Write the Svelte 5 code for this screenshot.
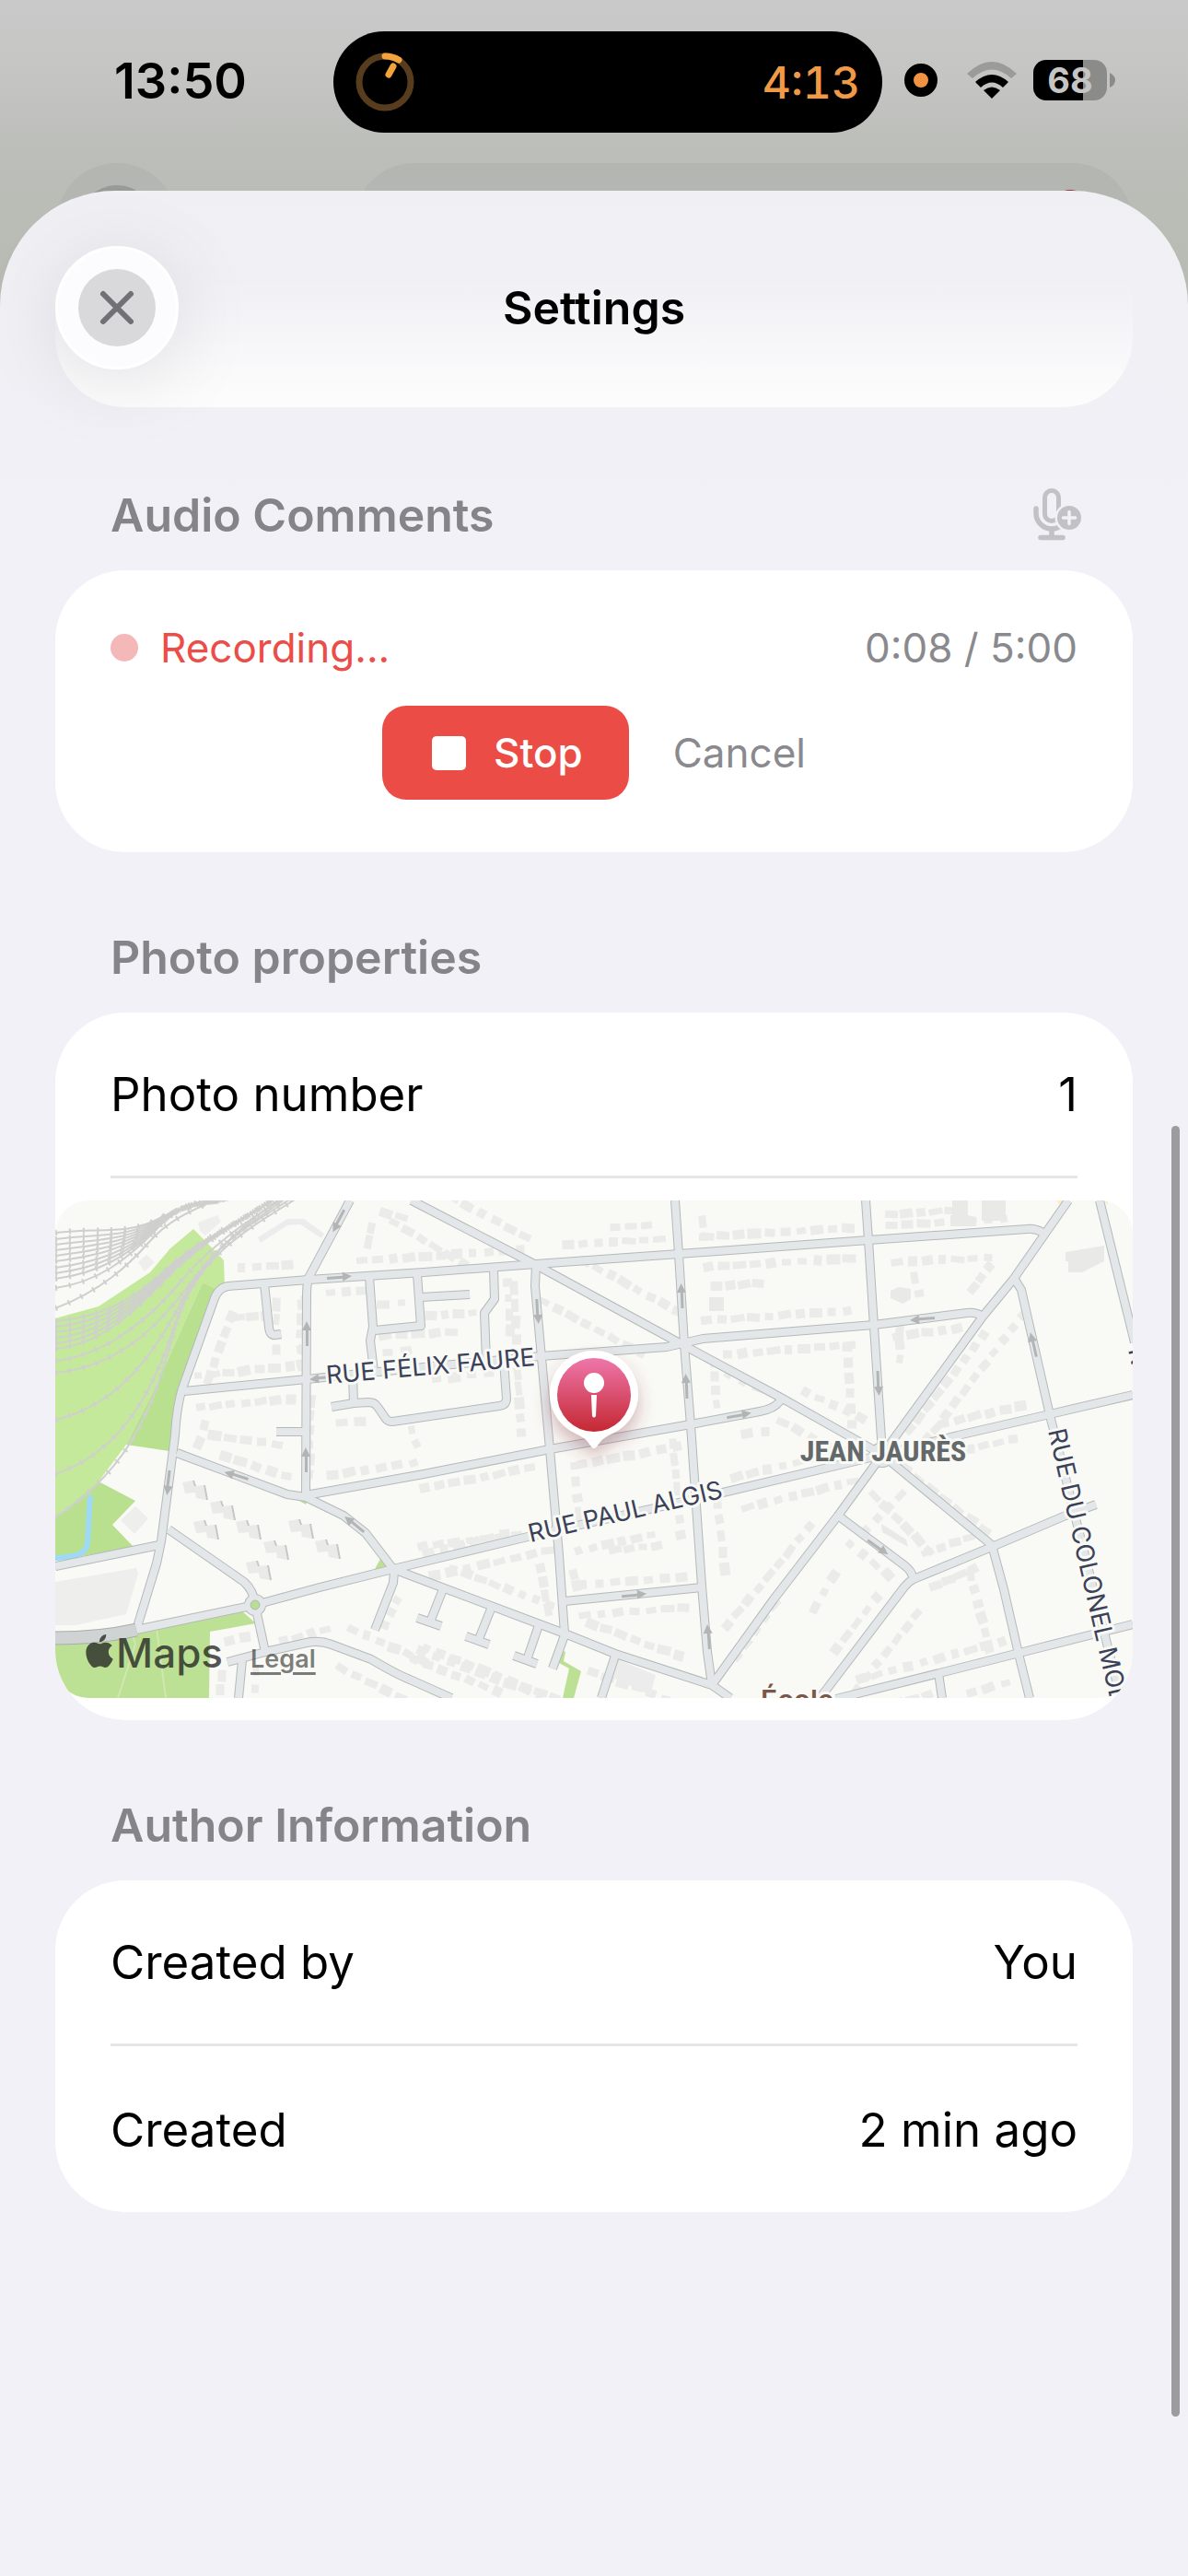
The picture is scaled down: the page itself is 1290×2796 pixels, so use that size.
<script>
	let recording = true;
	let elapsed = '0:08';
	let limit = '5:00';

	const author = [
		{ label: 'Created by', value: 'You' },
		{ label: 'Created', value: '2 min ago' }
	];

	const roads = [
		'M320 0 L275 84 Q273 92 273 104 L272 320',
		'M88 466 L110 394 L115 370 L130 255 Q132 222 138 204 L173 106 Q178 94 188 93 L275 86 L400 78 L522 69 L677 58 L883 43 L1055 31 Q1064 30 1073 35',
		'M387 0 L522 70 L680 156 L788 214 L898 276 L1017 374 L1030 422 L1046 492 L1058 540',
		'M522 70 L521 93 L537 270 L547 385 L553 470',
		'M673 0 L677 58 L683 156 L690 244 L702 418 L708 490 L713 526',
		'M880 0 L883 43 L889 137 L898 274',
		'M140 207 L273 194 L400 181 L527 169 L664 159 L703 150 L889 135 L990 122 Q1000 121 1007 126',
		'M132 274 L252 319 L272 322 L313 342 L337 361 L367 400 L420 420 L553 470 L608 492 L713 526 L733 540',
		'M272 320 L400 297 L537 270 L690 243 L765 229 Q782 226 788 216',
		'M88 466 L217 439 L287 420 L367 400 L513 365 L725 317 L898 276 L980 255 L1080 232 L1170 211',
		'M123 357 L205 414 Q216 424 217 439 L228 490',
		'M187 501 L228 490 L273 480 Q287 477 300 482 L343 498 Q370 514 385 520 L430 540',
		'M203 499 L199 540',
		'M368 402 L367 415 L347 466',
		'M0 397 L113 374',
		'M1134 0 L1172 154',
		'M1100 0 L1040 86 L1007 126 L898 276 L850 342 L780 433 L713 526',
		'M1041 84 L1049 97 L1080 233 L1158 545',
		'M850 342 L922 396 Q930 402 932 411',
		'M1130 330 L1097 342 L1017 376 L932 411 Q926 414 920 422 L838 530 L830 540',
		'M848 541 L960 513 L1047 491 L1170 460',
		'M959 513 L963 540',
		'M553 435 L702 420',
		'M227 90 L232 138 Q233 146 238 146 L245 145',
		'M341 83 L345 137 L342 152 L346 185',
		'M347 141 L397 136 L393 80',
		'M397 105 L450 102',
		'M476 74 L477 107 L466 122 L468 174',
		'M487 174 L490 215 Q490 222 482 223 L380 238 L366 240 Q360 240 357 234 L350 224 Q347 219 340 219 L324 220 L300 224',
		'M323 190 L324 220',
		'M240 251 L272 251',
		'M421 422 L408 455',
		'M393 453 L419 462',
		'M474 441 L460 476',
		'M446 473 L471 482',
		'M525 461 L513 496',
		'M498 494 L523 503',
		'M553 472 L540 508',
		'M608 494 L593 540'
	];

	const yardTracks = [35, 42, 48, 54, 60, 66, 73, 79, 85, 95].map(
		(y, i) => `M0 ${y} C45 ${y - 6} 78 ${38 + i * 3} 112 ${20 + i} S165 6 190 -4`
	);
	const mainTracks = [
		'M0 117 C50 98 80 70 102 45 S150 10 180 -3',
		...[131, 137, 143, 149, 155, 161].map(
			(y, i) => `M0 ${y} C45 ${y - 4} 80 ${112 + i * 3} 118 ${77 + i * 2} S190 30 238 -2`
		),
		'M0 174 C60 168 110 120 138 86 S210 20 248 -2',
		'M0 187 C70 180 112 135 142 96 S205 24 245 -2',
		'M0 238 C70 222 108 165 138 108 S205 30 250 -2',
		'M0 297 C80 270 110 195 133 126 S200 34 256 -2',
		'M0 344 C90 286 110 210 130 138 S200 36 262 -2'
	];
	const tracks = [...yardTracks, ...mainTracks];

	// Stretches of street with houses beside them: x1, y1, x2, y2, distance from the axis
	const frontages = [
		[195, 92, 262, 87, -18], [290, 84, 340, 81, 17], [325, 82, 515, 69, -16], [345, 100, 385, 96, 14],
		[285, 100, 281, 190, 13], [262, 105, 262, 185, -5], [178, 112, 148, 195, -17], [190, 112, 235, 108, 16],
		[250, 105, 250, 170, 10], [148, 206, 265, 194, -15], [148, 206, 262, 196, 19], [152, 230, 140, 268, -14],
		[165, 250, 250, 262, 4], [172, 290, 255, 316, -15], [288, 210, 285, 305, 10], [300, 225, 340, 222, 17],
		[295, 314, 400, 298, -15], [390, 299, 520, 274, 15], [390, 240, 400, 270, 6], [390, 376, 510, 362, 0],
		[400, 0, 510, 58, -17], [370, 4, 460, 58, 18], [350, 12, 385, 20, 0], [330, 20, 325, 50, -14],
		[400, 116, 460, 112, 10], [350, 160, 390, 156, 6], [350, 160, 440, 154, -12], [405, 195, 480, 186, 0],
		[505, 85, 510, 160, 8], [490, 80, 495, 150, 0], [500, 180, 505, 260, -2],
		[550, 66, 665, 58, -17], [530, 95, 650, 158, 13], [560, 76, 675, 138, -16], [600, 30, 650, 26, 0],
		[690, 15, 693, 50, -12], [700, 56, 870, 46, -17], [700, 56, 870, 46, 17], [710, 80, 770, 76, 14],
		[700, 148, 870, 136, -17], [720, 150, 870, 138, 18], [900, 45, 1040, 36, -17], [905, 45, 1020, 40, 22],
		[900, 15, 980, 10, 0], [930, 75, 940, 110, 0], [905, 130, 985, 120, 18], [905, 132, 905, 180, -12],
		[700, 170, 705, 230, -14], [720, 190, 770, 212, -6], [800, 220, 875, 255, -17], [790, 222, 870, 262, 17],
		[875, 150, 882, 250, 16], [910, 245, 1000, 130, 16], [925, 255, 1040, 105, 20],
		[1030, 75, 1005, 110, 15], [960, 258, 1060, 236, -15], [980, 256, 1045, 242, 16],
		[560, 270, 680, 248, 18], [550, 280, 556, 350, -13], [556, 360, 650, 340, 22], [560, 400, 565, 425, -2],
		[565, 434, 690, 424, -16], [565, 434, 690, 424, 17], [600, 380, 660, 374, 0], [680, 255, 690, 370, 10],
		[705, 320, 715, 410, -13], [740, 318, 870, 286, 17], [735, 318, 870, 286, -16], [740, 240, 780, 236, 14],
		[400, 398, 500, 374, -14], [400, 392, 540, 362, 17], [420, 410, 540, 455, -14], [535, 390, 545, 450, 9],
		[400, 470, 555, 530, 14], [385, 490, 490, 530, 6], [570, 470, 680, 510, -14], [580, 500, 690, 540, 10],
		[770, 420, 720, 490, -20], [840, 360, 740, 480, 20], [850, 400, 820, 450, 0], [870, 350, 925, 395, 22],
		[905, 300, 1005, 378, -18], [900, 300, 970, 370, 22], [945, 400, 1005, 378, -16], [945, 412, 1000, 388, 10],
		[1005, 395, 1028, 490, 13], [925, 430, 850, 525, -20], [905, 430, 850, 500, 10], [870, 535, 1040, 490, -14],
		[870, 540, 950, 518, 17], [980, 515, 1035, 500, 22], [910, 300, 860, 350, -20],
		[240, 480, 300, 464, 0], [310, 475, 400, 515, -14], [310, 490, 390, 530, 16], [190, 510, 186, 540, 8],
		[224, 500, 222, 540, 6], [380, 430, 360, 470, 6], [400, 460, 560, 520, 28], [180, 480, 215, 472, 0]
	];

	function noise(n) {
		const v = Math.sin(n * 127.1) * 43758.5453;
		return v - Math.floor(v);
	}

	const houses = frontages.flatMap(([x1, y1, x2, y2, off], row) => {
		const dx = x2 - x1;
		const dy = y2 - y1;
		const length = Math.hypot(dx, dy);
		const angle = (Math.atan2(dy, dx) * 180) / Math.PI;
		const count = Math.max(2, Math.round(length / 17));
		return Array.from({ length: count }, (_, i) => {
			const seed = row * 31 + i;
			const t = (i + 0.5) / count;
			return {
				x: Math.round(x1 + dx * t - (dy / length) * off),
				y: Math.round(y1 + dy * t + (dx / length) * off),
				w: 8 + Math.round(noise(seed) * 7),
				h: 7 + Math.round(noise(seed + 0.4) * 4),
				angle: Math.round(angle + noise(seed + 0.7) * 16 - 8)
			};
		});
	});

	const blocks = [[138, 306], [168, 328], [150, 349], [196, 349], [226, 371], [253, 348], [282, 370], [207, 393]];

	const arrows = [
		[308, 22, 118], [308, 83, -4], [273, 145, -90], [290, 193, 175], [272, 282, -90], [197, 299, 198],
		[123, 306, 97], [325, 352, 220], [524, 120, 87], [680, 104, -92], [685, 202, -92], [742, 233, -10],
		[628, 428, -5], [709, 474, -94], [942, 129, 176], [894, 198, 88], [1062, 157, -103], [893, 376, 36]
	];
</script>

<svelte:head>
	<title>Settings</title>
</svelte:head>

<div class="screen">
	<div class="backdrop" aria-hidden="true">
		<span class="ghost-circle"></span>
		<span class="ghost-pill"></span>
	</div>

	<div class="status-bar">
		<time class="clock">13:50</time>
		<div class="island">
			<svg class="timer" viewBox="0 0 64 64" aria-hidden="true">
				<circle cx="32" cy="32" r="28" fill="none" stroke="#573d1d" stroke-width="7" />
				<path d="M32 4 A28 28 0 0 1 47 8" class="hand" />
				<path d="M36 24 L41 15" class="hand" />
			</svg>
			<span class="countdown">4:13</span>
		</div>
		<div class="indicators">
			<span class="mic-dot"></span>
			<svg class="wifi" viewBox="0 0 54 40" aria-hidden="true">
				<path d="M0 13 Q27 -13 54 13 L48 18 Q27 -1 6 18 Z" fill="#9b9b99" />
				<path d="M9 22 Q27 6 45 22 L39 28 Q27 17 15 28 Z" />
				<path d="M18 31 Q27 24 36 31 L27 40 Z" />
			</svg>
			<div class="battery">
				<span class="level">68</span>
				<svg class="nub" viewBox="0 0 6 16" aria-hidden="true">
					<path d="M0 0 Q6 3 6 8 T0 16 Z" fill="#8b8b89" />
				</svg>
			</div>
		</div>
	</div>

	<main class="sheet">
		<header class="sheet-header">
			<button class="close" aria-label="Close">
				<svg viewBox="0 0 84 84" aria-hidden="true">
					<circle cx="42" cy="42" r="42" fill="#d9d9dc" />
					<path d="M27 27 L57 57 M57 27 L27 57" stroke="#717175" stroke-width="6" stroke-linecap="round" />
				</svg>
			</button>
			<h1>Settings</h1>
		</header>

		<section>
			<div class="section-title">
				<h2>Audio Comments</h2>
				<button class="add-audio" aria-label="Add audio comment" disabled={recording}>
					<svg viewBox="0 0 52 58" fill="none" stroke="#c1c1c6" stroke-linecap="round" aria-hidden="true">
						<rect x="12.5" y="2.5" width="15" height="33" rx="7.5" stroke-width="5" />
						<path d="M3 22 V27 A17 17 0 0 0 37 27" stroke-width="5.5" />
						<path d="M20 46 V53 M8 53.5 H32" stroke-width="5.5" />
						<circle cx="39" cy="32" r="15.5" fill="#f2f1f7" stroke="none" />
						<circle cx="39" cy="32" r="13" fill="#c1c1c6" stroke="none" />
						<path d="M39 25.5 V38.5 M32.5 32 H45.5" stroke="#f2f1f7" stroke-width="3.5" />
					</svg>
				</button>
			</div>
			<div class="card recorder">
				<div class="recorder-status">
					<span class="rec-dot"></span>
					<span class="rec-label">Recording...</span>
					<span class="rec-time">{elapsed} / {limit}</span>
				</div>
				<div class="recorder-actions">
					<button class="stop" on:click={() => (recording = false)}>
						<span class="stop-icon"></span>
						Stop
					</button>
					<button class="cancel" on:click={() => (recording = false)}>Cancel</button>
				</div>
			</div>
		</section>

		<section>
			<div class="section-title">
				<h2>Photo properties</h2>
			</div>
			<div class="card">
				<dl>
					<div class="row divided">
						<dt>Photo number</dt>
						<dd>1</dd>
					</div>
				</dl>
				<div class="map">
					<svg class="map-canvas" viewBox="0 0 1170 540" role="img" aria-label="Map of the photo location">
						<defs>
							<linearGradient id="pin-fill" x1="0" y1="0" x2="0" y2="1">
								<stop offset="0" stop-color="#ee76aa" />
								<stop offset="1" stop-color="#c52832" />
							</linearGradient>
							<filter id="pin-shadow" x="-50%" y="-50%" width="200%" height="200%">
								<feDropShadow dx="0" dy="10" stdDeviation="9" flood-color="#8c3c46" flood-opacity="0.35" />
							</filter>
						</defs>
						<rect width="1170" height="540" fill="#f9f9f5" />

						<!-- parks and water -->
						<path d="M0 128 L47 115 L103 78 L125 52 L150 31 L165 46 L183 65 L184 93 L173 97 L160 89 L110 200 L77 265 L47 305 L0 344 Z" fill="#c4e99b" />
						<path d="M160 89 L175 97 L138 204 L124 272 L77 265 L110 200 Z" fill="#b8e08f" />
						<path d="M47 305 L87 326 L62 352 L85 376 L0 391 V344 Z" fill="#b8e08f" />
						<path d="M0 480 L88 468 L203 446 L218 459 L168 468 L167 540 H0 Z" fill="#bde194" />
						<path d="M83 468 L87 482 L68 540 M110 464 L120 540" stroke="#cfe8b0" stroke-width="2" fill="none" />
						<path d="M550 488 L554 490 L552 500 L571 511 L563 540 L551 540 L558 508 L547 502 Z M347 400 L353 389 L363 400 Z M258 322 L272 330 L275 324 Z" fill="#bde194" />
						<path d="M38 320 L35 372 Q34 381 23 385 Q12 388 0 388" stroke="#9edaf5" stroke-width="6" fill="none" />
						<path d="M1087 0 H1094 L1091 5 Z M1139 0 H1144 L1142 5 Z" fill="#fdecc4" />

						<!-- railway -->
						{#each tracks as d}
							<path {d} class="rail" />
							<path {d} class="sleepers" />
						{/each}

						<!-- buildings -->
						{#each houses as h}
							<rect
								x={-h.w / 2}
								y={-h.h / 2}
								width={h.w}
								height={h.h}
								transform="translate({h.x} {h.y}) rotate({h.angle})"
								class="house"
							/>
						{/each}
						{#each blocks as [x, y]}
							<g transform="translate({x} {y})">
								<path d="M0 0 L11 -2 L13 4 L23 3 L26 19 L15 17 L14 11 L3 12 Z" fill="#eaeae9" />
								<path d="M11 -2 L13 -2 L15 4 L13 4 Z M23 3 L25 3 L28 19 L26 19 Z" fill="#c5c6c5" />
							</g>
						{/each}
						<path d="M0 414 L88 399 L90 405 L77 449 L22 461 H0 Z M71 347 L87 332 L101 345 L86 362 Z M155 24 L176 16 L180 23 L163 38 L157 33 Z M90 67 L99 59 L108 67 L97 77 Z" fill="#eeeeed" />
						<path d="M220 40 L252 20 L270 20 L292 36 L289 41 L266 26 L252 27 L223 46 Z M610 498 L652 515 L646 537 L606 518 Z" fill="#ececec" />
						<path d="M1097 56 L1139 49 V66 L1115 78 H1100 V66 H1097 Z M1006 0 H1032 V22 H1006 Z M974 0 H991 V16 L1000 18 V28 H972 V16 H974 Z" fill="#e9eae7" />
						<path d="M710 105 H726 V120 H710 Z M907 98 L916 94 L929 96 V107 L920 112 L907 106 Z M897 351 L924 368 L926 376 L898 360 Z" fill="#e9e9e8" />

						<!-- streets -->
						{#each roads as d}
							<path {d} class="road-edge" />
						{/each}
						<circle cx="217" cy="439" r="12" fill="#b4b9b9" />
						<circle cx="898" cy="276" r="14" fill="#b4b9b9" />
						{#each roads as d}
							<path {d} class="road" />
						{/each}
						<circle cx="217" cy="439" r="11" fill="#e3e7e9" />
						<circle cx="217" cy="439" r="5" fill="#b9dd92" stroke="#b4b9b9" />
						<circle cx="898" cy="276" r="13" fill="#e3e7e9" />
						<path d="M0 475 Q48 475 88 466" stroke="#a9adae" stroke-width="15" fill="none" />
						<path d="M0 475 Q48 475 88 466" stroke="#cfd3d4" stroke-width="13" fill="none" />

						{#each arrows as [x, y, angle]}
							<path
								d="M-13 -1 H4 V-5 L14 0 L4 5 V2 H-13 Z"
								fill="#b3b5b5"
								transform="translate({x} {y}) rotate({angle})"
							/>
						{/each}

						<text class="street" transform="translate(295 199) rotate(-5)">RUE FÉLIX FAURE</text>
						<text class="street" transform="translate(516 371) rotate(-13)">RUE PAUL ALGIS</text>
						<text class="street" transform="translate(1078 250) rotate(77)">RUE DU COLONEL MOLL</text>
						<text class="street" transform="translate(1165 162) rotate(77)">R</text>
						<text class="district" x="899" y="283" text-anchor="middle">JEAN JAURÈS</text>
						<text class="place" x="766" y="553">École</text>

						<!-- photo marker -->
						<path
							d="M585 163 A47 47 0 0 1 605 253 Q594 257 588 267 Q585 271 582 267 Q576 257 565 253 A47 47 0 0 1 585 163 Z"
							fill="#fff"
							filter="url(#pin-shadow)"
						/>
						<circle cx="585" cy="211" r="40" fill="url(#pin-fill)" />
						<circle cx="585" cy="198" r="11" fill="#fff" />
						<path d="M582 211 H588 L587 234 Q585 237 583 234 Z" fill="#fff" />
					</svg>
					<div class="attribution">
						<svg class="apple" viewBox="0 0 24 24" aria-hidden="true">
							<path
								d="M12.152 6.896c-.948 0-2.415-1.078-3.96-1.04-2.04.027-3.91 1.183-4.961 3.014-2.117 3.675-.546 9.103 1.519 12.09 1.013 1.454 2.208 3.09 3.792 3.039 1.52-.065 2.09-.987 3.935-.987 1.831 0 2.35.987 3.96.948 1.637-.026 2.676-1.48 3.676-2.948 1.156-1.688 1.636-3.325 1.662-3.415-.039-.013-3.182-1.221-3.22-4.857-.026-3.04 2.48-4.494 2.597-4.559-1.429-2.09-3.623-2.324-4.39-2.376-2-.156-3.675 1.09-4.61 1.09zM15.53 3.83c.843-1.012 1.4-2.427 1.245-3.83-1.207.052-2.662.805-3.532 1.818-.78.896-1.454 2.338-1.273 3.714 1.338.104 2.715-.688 3.559-1.701"
							/>
						</svg>
						<span class="maps">Maps</span>
						<a href="#legal">Legal</a>
					</div>
				</div>
			</div>
		</section>

		<section>
			<div class="section-title">
				<h2>Author Information</h2>
			</div>
			<dl class="card">
				{#each author as item, i}
					<div class="row" class:divided={i < author.length - 1}>
						<dt>{item.label}</dt>
						<dd>{item.value}</dd>
					</div>
				{/each}
			</dl>
		</section>

		<span class="scroll-thumb" aria-hidden="true"></span>
	</main>
</div>

<style>
	:global(body) {
		margin: 0;
		background: #f2f1f7;
	}

	.screen {
		position: relative;
		display: flex;
		flex-direction: column;
		min-height: 100vh;
		overflow: hidden;
		background: linear-gradient(#c9c9c9 0, #c5c5c4 80px, #bcbeb9 160px, #b7b9b2 340px);
		font-family: Inter, 'Liberation Sans', sans-serif;
		color: #000;
	}

	.ghost-circle,
	.ghost-pill {
		position: absolute;
		top: 177px;
		height: 132px;
		border-radius: 66px;
		background: #b4b6b2;
	}

	.ghost-circle {
		left: 61px;
		width: 132px;
	}

	.ghost-circle::after {
		content: '';
		position: absolute;
		inset: 24px;
		border-radius: 50%;
		background: #989a95;
	}

	.ghost-pill {
		left: 384px;
		right: 60px;
	}

	.ghost-pill::after {
		content: '';
		position: absolute;
		top: 29px;
		right: 50px;
		width: 36px;
		height: 36px;
		border-radius: 50%;
		background: #93352f;
	}

	.status-bar {
		position: relative;
		display: grid;
		grid-template-columns: 362px 1fr 332px;
		align-items: start;
		box-sizing: border-box;
		height: 207px;
		padding-top: 34px;
	}

	.clock {
		padding: 24px 0 0 124px;
		font-size: 54px;
		font-weight: 600;
		line-height: 60px;
	}

	.island {
		display: flex;
		align-items: center;
		justify-content: space-between;
		box-sizing: border-box;
		height: 110px;
		padding: 0 24px;
		border-radius: 55px;
		background: #000;
	}

	.timer {
		width: 64px;
		height: 64px;
	}

	.hand {
		fill: none;
		stroke: #f2a33c;
		stroke-width: 7;
		stroke-linecap: round;
	}

	.countdown {
		color: #f09a48;
		font-size: 48px;
		font-weight: 500;
		font-variant-numeric: tabular-nums;
	}

	.indicators {
		display: flex;
		align-items: center;
		height: 106px;
		padding-left: 24px;
	}

	.mic-dot {
		box-sizing: border-box;
		width: 36px;
		height: 36px;
		margin-right: 32px;
		border: 10px solid #000;
		border-radius: 50%;
		background: #f09443;
	}

	.wifi {
		width: 54px;
		height: 40px;
		margin-right: 18px;
	}

	.battery {
		display: flex;
		align-items: center;
		gap: 3px;
	}

	.level {
		width: 80px;
		border-radius: 14px;
		background: linear-gradient(90deg, #000 68%, #8b8b89 68%);
		color: #c5c5c4;
		font-size: 38px;
		font-weight: 700;
		line-height: 44px;
		text-align: center;
	}

	.nub {
		width: 6px;
		height: 16px;
	}

	.sheet {
		position: relative;
		flex: 1;
		padding: 0 60px 120px;
		border-radius: 125px 125px 0 0;
		background: linear-gradient(#efeff4 0, #f2f1f7 400px);
	}

	.sheet-header {
		display: grid;
		grid-template-columns: 134px 1fr 134px;
		align-items: center;
		margin-bottom: 3px;
		padding: 60px 0 41px;
		border-radius: 0 0 76px 76px;
		background: linear-gradient(rgba(252, 252, 252, 0) 40%, #fcfcfc 95%);
	}

	button {
		padding: 0;
		border: 0;
		background: none;
		font: inherit;
		cursor: pointer;
	}

	.close {
		display: grid;
		place-items: center;
		box-sizing: border-box;
		width: 134px;
		height: 134px;
		border: 3px solid #fff;
		border-radius: 50%;
		background: #fcfcfe;
		box-shadow: 0 12px 90px rgba(0, 0, 30, 0.1);
	}

	.close svg {
		width: 84px;
		height: 84px;
	}

	h1,
	h2,
	dl,
	dd {
		margin: 0;
	}

	h1 {
		font-size: 50px;
		font-weight: 600;
		line-height: 60px;
		text-align: center;
	}

	.section-title {
		display: flex;
		align-items: center;
		justify-content: space-between;
		padding: 84px 56px 30px 60px;
	}

	h2 {
		color: #858489;
		font-size: 50px;
		font-weight: 600;
		line-height: 60px;
	}

	.add-audio,
	.add-audio svg {
		display: block;
		width: 52px;
		height: 58px;
	}

	.card {
		overflow: hidden;
		border-radius: 76px;
		background: #fff;
	}

	.recorder {
		display: flex;
		flex-direction: column;
		gap: 36px;
		padding: 57px 60px;
		font-size: 44px;
	}

	.recorder-status {
		display: flex;
		align-items: center;
		line-height: 54px;
	}

	.rec-dot {
		width: 30px;
		height: 30px;
		margin-right: 24px;
		border-radius: 50%;
		background: #f4b8b9;
	}

	.rec-label {
		color: #eb4d48;
	}

	.rec-time {
		margin-left: auto;
		color: #8a8a8e;
	}

	.recorder-actions {
		display: flex;
		align-items: center;
		justify-content: center;
		gap: 48px;
	}

	.stop {
		display: flex;
		align-items: center;
		gap: 30px;
		height: 102px;
		padding: 0 50px 0 54px;
		border-radius: 26px;
		background: #eb4d46;
		color: #fff;
		font-weight: 500;
	}

	.stop-icon {
		width: 37px;
		height: 37px;
		border-radius: 5px;
		background: #fff;
	}

	.cancel {
		color: #8a8a8e;
	}

	.row {
		display: flex;
		align-items: center;
		justify-content: space-between;
		box-sizing: border-box;
		height: 180px;
		margin: 0 60px;
		font-size: 51px;
	}

	.divided {
		border-bottom: 3px solid #e6e6e7;
	}

	.map {
		position: relative;
		margin: 24px 0;
		overflow: hidden;
		border-radius: 36px;
	}

	.map-canvas {
		display: block;
		width: 100%;
		height: auto;
	}

	.rail {
		fill: none;
		stroke: #cfd0cd;
		stroke-width: 2;
	}

	.sleepers {
		fill: none;
		stroke: #cfd0cd;
		stroke-width: 6;
		stroke-dasharray: 2 13;
	}

	.house {
		fill: #ebebea;
	}

	.road-edge,
	.road {
		fill: none;
		stroke: #b4b9b9;
		stroke-width: 10;
		stroke-linejoin: round;
	}

	.road {
		stroke: #e3e7e9;
		stroke-width: 8;
	}

	.street,
	.district,
	.place {
		paint-order: stroke;
		stroke: #f9f9f5;
		stroke-width: 6px;
		stroke-linejoin: round;
	}

	.street {
		fill: #3b4158;
		font-size: 27px;
	}

	.district {
		fill: #63696b;
		font-family: 'Roboto Condensed', 'Liberation Sans Narrow', Roboto, sans-serif;
		font-size: 32px;
		font-weight: 700;
	}

	.place {
		fill: #7b5748;
		font-size: 30px;
		font-weight: 600;
	}

	.attribution {
		position: absolute;
		left: 30px;
		bottom: 14px;
		display: flex;
		align-items: baseline;
		color: rgba(30, 30, 30, 0.75);
		line-height: 56px;
	}

	.apple {
		width: 36px;
		height: 36px;
		fill: currentColor;
	}

	.maps {
		margin-right: 30px;
		font-size: 44px;
		font-weight: 500;
	}

	.attribution a {
		color: rgba(30, 30, 30, 0.58);
		font-size: 27px;
		font-weight: 600;
		text-underline-offset: 5px;
		text-decoration-thickness: 3px;
	}

	.scroll-thumb {
		position: absolute;
		top: 1015px;
		right: 9px;
		width: 9px;
		height: 1401px;
		border-radius: 5px;
		background: #9c9c9e;
	}
</style>
